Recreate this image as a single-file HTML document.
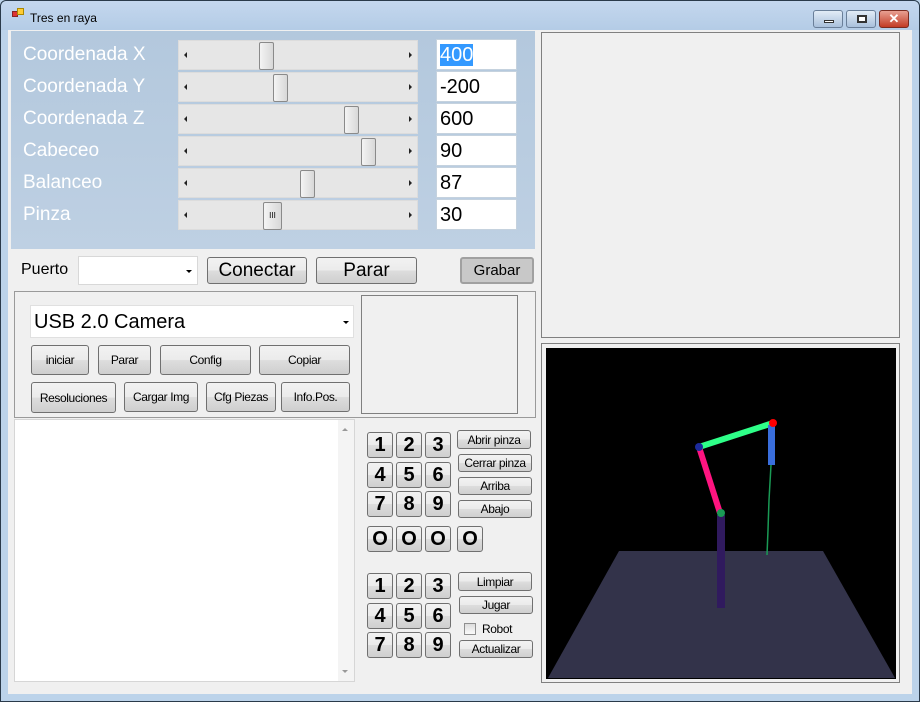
<!DOCTYPE html>
<html><head><meta charset="utf-8"><style>
*{box-sizing:border-box}
body{margin:0;width:920px;height:702px;overflow:hidden;font-family:"Liberation Sans",sans-serif;background:#bcd3ea;position:relative}
.a{position:absolute}
.btn{position:absolute;border:1px solid #707070;border-radius:3px;background:linear-gradient(#f2f2f2 0%,#ebebeb 50%,#dddddd 51%,#cfcfcf 100%);display:flex;align-items:center;justify-content:center;font-size:12px;color:#000;letter-spacing:-0.4px}
.lbl{position:absolute;color:#fff;font-size:19px;left:23px}
.sb{position:absolute;left:178px;width:240px;height:30px;background:#e6e6e6;border:1px solid #dcdcdc}
.sb .l,.sb .r{position:absolute;top:11px;width:0;height:0;border-top:3px solid transparent;border-bottom:3px solid transparent}
.sb .l{left:5px;border-right:3px solid #222}
.sb .r{right:5px;border-left:3px solid #222}
.th{position:absolute;top:1px;width:15px;height:28px;border:1px solid #8a8a8a;border-radius:2px;background:linear-gradient(90deg,#f4f4f4,#d8d8d8)}
.tb{position:absolute;left:436px;width:81px;height:31px;background:#fff;border:1px solid #c5d2de;font-size:20px;padding:4px 0 0 3px}
.n{position:absolute;width:26px;height:26px;border:1px solid #707070;border-radius:3px;background:linear-gradient(#f2f2f2 0%,#ebebeb 50%,#dddddd 51%,#cfcfcf 100%);font-weight:bold;font-size:20px;display:flex;align-items:center;justify-content:center}
</style></head><body>
<div class="a" style="left:0;top:0;width:920px;height:702px;border:1px solid #2a3a4a;border-radius:6px 6px 0 0"></div>
<div class="a" style="left:1px;top:1px;width:918px;height:29px;background:linear-gradient(#c4d7ee,#b4cce6);border-radius:6px 6px 0 0"></div>
<div class="a" style="left:12px;top:11px;width:6px;height:6px;background:#d33;border:1px solid #822"></div>
<div class="a" style="left:17px;top:8px;width:7px;height:7px;background:#fc3;border:1px solid #a80"></div>
<div class="a" style="left:30px;top:11px;font-size:12px;color:#000">Tres en raya</div>
<div class="a" style="left:813px;top:10px;width:30px;height:18px;border:1px solid #6a7f99;border-radius:3px;background:linear-gradient(#e2ecf7,#a9c0db)"><div class="a" style="left:10px;top:9px;width:10px;height:3px;background:#fff;border:1px solid #333"></div></div>
<div class="a" style="left:846px;top:10px;width:30px;height:18px;border:1px solid #6a7f99;border-radius:3px;background:linear-gradient(#e2ecf7,#a9c0db)"><div class="a" style="left:10px;top:4px;width:10px;height:8px;border:2px solid #333;background:#fff"></div></div>
<div class="a" style="left:879px;top:10px;width:30px;height:18px;border:1px solid #7a2b20;border-radius:3px;background:linear-gradient(#e8a092,#c23b25);color:#fff;font-weight:bold;font-size:13px;text-align:center;line-height:16px">✕</div>
<div class="a" style="left:8px;top:30px;width:904px;height:664px;background:#f0f0f0"></div>

<div class="a" style="left:11px;top:31px;width:524px;height:218px;background:linear-gradient(#b3c8dd,#bed0e3)"></div>
<div class="lbl" style="top:44px">Coordenada X</div>
<div class="lbl" style="top:76px">Coordenada Y</div>
<div class="lbl" style="top:108px">Coordenada Z</div>
<div class="lbl" style="top:140px">Cabeceo</div>
<div class="lbl" style="top:172px">Balanceo</div>
<div class="lbl" style="top:204px">Pinza</div>
<div class="sb" style="top:40px"><i class="l"></i><i class="r"></i><div class="th" style="left:80px"></div></div>
<div class="sb" style="top:72px"><i class="l"></i><i class="r"></i><div class="th" style="left:94px"></div></div>
<div class="sb" style="top:104px"><i class="l"></i><i class="r"></i><div class="th" style="left:165px"></div></div>
<div class="sb" style="top:136px"><i class="l"></i><i class="r"></i><div class="th" style="left:182px"></div></div>
<div class="sb" style="top:168px"><i class="l"></i><i class="r"></i><div class="th" style="left:121px"></div></div>
<div class="sb" style="top:200px"><i class="l"></i><i class="r"></i><div class="th" style="left:84px;width:19px;font-size:8px;text-align:center;line-height:26px">III</div></div>
<div class="tb" style="top:39px"><span style="background:#3399ff;color:#fff">400</span></div>
<div class="tb" style="top:71px">-200</div>
<div class="tb" style="top:103px">600</div>
<div class="tb" style="top:135px">90</div>
<div class="tb" style="top:167px">87</div>
<div class="tb" style="top:199px">30</div>

<div class="a" style="left:21px;top:261px;font-size:16px">Puerto</div>
<div class="a" style="left:78px;top:256px;width:120px;height:29px;background:#fff;border:1px solid #d8d8d8"><div class="a" style="right:5px;top:13px;border-left:3px solid transparent;border-right:3px solid transparent;border-top:3px solid #000"></div></div>
<div class="btn" style="left:207px;top:257px;width:100px;height:27px;font-size:19px;letter-spacing:0">Conectar</div>
<div class="btn" style="left:316px;top:257px;width:101px;height:27px;font-size:19px;letter-spacing:0">Parar</div>
<div class="btn" style="left:460px;top:257px;width:74px;height:27px;font-size:15px;background:#c8c8c8;border:2px solid #a0a0a0;letter-spacing:0">Grabar</div>

<div class="a" style="left:14px;top:291px;width:522px;height:127px;border:1px solid #9a9a9a"></div>
<div class="a" style="left:30px;top:305px;width:324px;height:33px;background:#fff;border:1px solid #e0e0e0;font-size:20px;padding:5px 0 0 3px">USB 2.0 Camera<div class="a" style="right:4px;top:15px;border-left:3px solid transparent;border-right:3px solid transparent;border-top:3px solid #000"></div></div>
<div class="btn" style="left:31px;top:345px;width:58px;height:30px">iniciar</div>
<div class="btn" style="left:98px;top:345px;width:53px;height:30px">Parar</div>
<div class="btn" style="left:160px;top:345px;width:91px;height:30px">Config</div>
<div class="btn" style="left:259px;top:345px;width:91px;height:30px">Copiar</div>
<div class="btn" style="left:31px;top:382px;width:85px;height:31px">Resoluciones</div>
<div class="btn" style="left:124px;top:382px;width:74px;height:30px">Cargar Img</div>
<div class="btn" style="left:206px;top:382px;width:70px;height:30px">Cfg Piezas</div>
<div class="btn" style="left:281px;top:382px;width:69px;height:30px">Info.Pos.</div>
<div class="a" style="left:361px;top:295px;width:157px;height:119px;border:1px solid #808080"></div>

<div class="a" style="left:14px;top:419px;width:341px;height:263px;background:#fff;border:1px solid #d6d6d6"></div>
<div class="a" style="left:338px;top:420px;width:16px;height:261px;background:#f4f4f4"></div>
<div class="a" style="left:342px;top:428px;border-left:3px solid transparent;border-right:3px solid transparent;border-bottom:3px solid #999"></div>
<div class="a" style="left:342px;top:670px;border-left:3px solid transparent;border-right:3px solid transparent;border-top:3px solid #999"></div>

<div class="n" style="left:367px;top:432px">1</div><div class="n" style="left:396px;top:432px">2</div><div class="n" style="left:425px;top:432px">3</div>
<div class="n" style="left:367px;top:462px">4</div><div class="n" style="left:396px;top:462px">5</div><div class="n" style="left:425px;top:462px">6</div>
<div class="n" style="left:367px;top:491px">7</div><div class="n" style="left:396px;top:491px">8</div><div class="n" style="left:425px;top:491px">9</div>
<div class="n" style="left:367px;top:526px">O</div><div class="n" style="left:396px;top:526px">O</div><div class="n" style="left:425px;top:526px">O</div><div class="n" style="left:457px;top:526px">O</div>
<div class="n" style="left:367px;top:573px">1</div><div class="n" style="left:396px;top:573px">2</div><div class="n" style="left:425px;top:573px">3</div>
<div class="n" style="left:367px;top:603px">4</div><div class="n" style="left:396px;top:603px">5</div><div class="n" style="left:425px;top:603px">6</div>
<div class="n" style="left:367px;top:632px">7</div><div class="n" style="left:396px;top:632px">8</div><div class="n" style="left:425px;top:632px">9</div>
<div class="btn" style="left:457px;top:430px;width:74px;height:19px">Abrir pinza</div>
<div class="btn" style="left:458px;top:454px;width:74px;height:18px">Cerrar pinza</div>
<div class="btn" style="left:458px;top:477px;width:74px;height:18px">Arriba</div>
<div class="btn" style="left:458px;top:500px;width:74px;height:18px">Abajo</div>
<div class="btn" style="left:458px;top:572px;width:74px;height:19px">Limpiar</div>
<div class="btn" style="left:459px;top:596px;width:74px;height:18px">Jugar</div>
<div class="a" style="left:464px;top:623px;width:12px;height:12px;border:1px solid #8f8f8f;background:linear-gradient(#ddd,#fafafa)"></div>
<div class="a" style="left:482px;top:622px;font-size:12px;letter-spacing:-0.4px">Robot</div>
<div class="btn" style="left:459px;top:640px;width:74px;height:18px">Actualizar</div>

<div class="a" style="left:541px;top:32px;width:359px;height:306px;border:1px solid #808080"></div>
<div class="a" style="left:541px;top:343px;width:359px;height:340px;border:1px solid #808080"></div>
<svg class="a" style="left:546px;top:348px" width="350" height="331" viewBox="546 348 350 331">
<rect x="546" y="348" width="350" height="331" fill="#000"/>
<polygon points="619,551 823,551 895,678 548,678" fill="#33334a"/>
<rect x="717" y="515" width="8" height="93" fill="#301a5e"/>
<line x1="720" y1="513" x2="699" y2="447" stroke="#ff1480" stroke-width="6"/>
<line x1="699" y1="447" x2="773" y2="423" stroke="#2eff88" stroke-width="6"/>
<rect x="768" y="425" width="7" height="40" fill="#3a6edc"/>
<polyline points="771,465 769,500 768,530 767,555" fill="none" stroke="#1a9a55" stroke-width="1.5"/>
<circle cx="699" cy="447" r="4" fill="#1c2a9a"/>
<circle cx="773" cy="423" r="4" fill="#ff0000"/>
<circle cx="721" cy="513" r="4" fill="#1a9a55"/>
</svg>
</body></html>
